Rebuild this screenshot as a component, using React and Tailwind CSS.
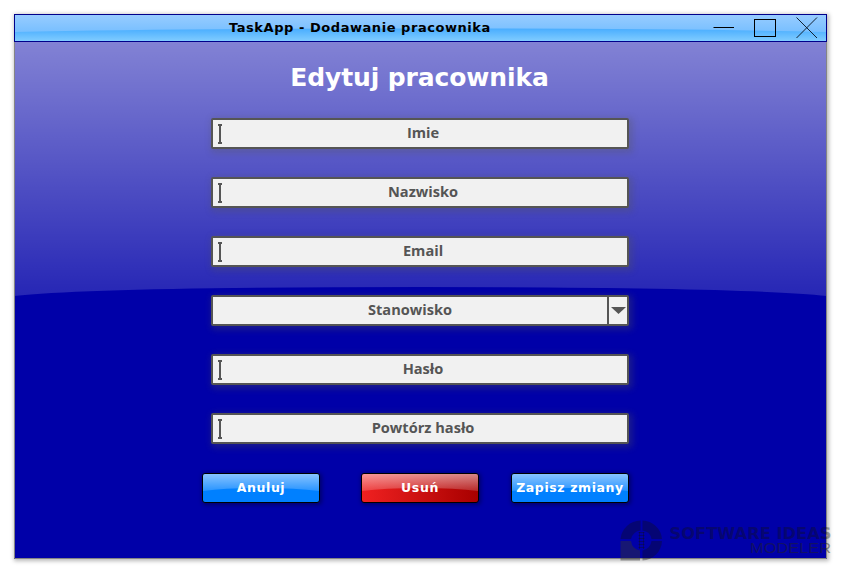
const TITLE_FONT = "font-['Verdana','DejaVu_Sans',sans-serif] font-bold";

function Caret() {
  return (
    <svg className="ml-[5px] shrink-0" width="4" height="20" viewBox="0 0 4 20" shapeRendering="crispEdges">
      <path d="M0 0H4V2H3V18H4V20H0V18H1V2H0Z" fill="#555" />
    </svg>
  );
}

function Field({ label, select }) {
  return (
    <div className="flex h-[31px] w-[418px] items-center rounded-[2px] border-2 border-[#555] bg-[#f1f1f1] shadow-[2px_2px_6px_2px_rgba(85,85,85,0.3)]">
      {!select && <Caret />}
      <span
        className={`flex-1 pb-[2px] text-center font-['Open_Sans','Noto_Sans',sans-serif] text-[14.6px] leading-[25px] font-bold text-[#555] ${
          select ? "" : "-ml-[3px]"
        }`}
      >
        {label}
      </span>
      {select && (
        <span className="flex h-full w-[20px] items-center justify-center border-l-2 border-[#555]">
          <svg className="shrink-0" width="15" height="7" viewBox="0 0 15 7">
            <path d="M0 0H15L7.5 7Z" fill="#555" />
          </svg>
        </span>
      )}
    </div>
  );
}

function Button({ label, red }) {
  return (
    <button
      className={`relative h-[30px] w-[118px] overflow-hidden rounded-[3px] border border-black shadow-[1px_1px_4px_1px_rgba(0,0,0,0.35)] ${
        red ? "bg-linear-to-r from-[#f02020] to-[#a80000]" : "bg-[#0080ff]"
      }`}
    >
      <svg className="absolute inset-0" width="116" height="28" viewBox="0 0 116 28">
        <defs>
          <linearGradient id="buttonGloss" x1="0" y1="0" x2="0" y2="1">
            <stop offset="0" stopColor="#fff" stopOpacity="0.53" />
            <stop offset="1" stopColor="#fff" stopOpacity="0.16" />
          </linearGradient>
        </defs>
        <path d="M0 0H116V17Q93 14 58 14T0 17Z" fill="url(#buttonGloss)" />
      </svg>
      <span className={`relative flex justify-center whitespace-nowrap pb-px text-[12.5px] leading-[26px] tracking-[0.6px] text-white ${TITLE_FONT}`}>
        {label}
      </span>
    </button>
  );
}

function WindowControls() {
  return (
    <svg className="ml-auto mr-[7px]" width="106" height="26" viewBox="0 0 106 26" fill="none" stroke="#000">
      <path d="M0.5 12.5H21" />
      <rect x="41.5" y="4.5" width="21" height="17" />
      <path d="M83.5 2.5L104 23M104 2.5L83.5 23" stroke="#123" />
    </svg>
  );
}

function Watermark() {
  return (
    <svg className="absolute left-[615px] top-[515px]" width="226" height="52" viewBox="615 515 226 52">
      <g fill="#111" opacity="0.34">
        <path d="M640.5 520.5A20.5 20.5 0 0 0 620.5 539H631A10.5 10.5 0 0 1 640.5 530.5Z" />
        <path d="M642.5 520.5A20.5 20.5 0 0 1 662 539H651.5A10.5 10.5 0 0 0 642.5 530.5Z" />
        <path d="M662 541A20.5 20.5 0 0 1 642.5 560.5V550.5A10.5 10.5 0 0 0 651.5 541Z" />
      </g>
      <path d="M620.5 541H631Q632 549 640 550.5V560.5H620.5Z" fill="#333" fillOpacity="0.45" />
      <path d="M639.5 532V549M643.5 532V549M638.5 532.5H644.5M638.5 535.5H644.5M638.5 538.5H644.5M638.5 541.5H644.5M638.5 544.5H644.5M638.5 547.5H644.5" stroke="#111" strokeOpacity="0.35" />
      <text x="669.5" y="539.2" textLength="162" lengthAdjust="spacingAndGlyphs" fontFamily="'DejaVu Sans', sans-serif" fontWeight="bold" fontSize="15" fill="#111" opacity="0.36">
        SOFTWARE IDEAS
      </text>
      <text x="750" y="552.5" textLength="81" lengthAdjust="spacingAndGlyphs" fontFamily="'Liberation Sans', Arial, sans-serif" fontSize="15.5" fill="#222" fillOpacity="0.5">
        MODELER
      </text>
    </svg>
  );
}

export default function App() {
  return (
    <div className="relative h-[573px] w-[841px] overflow-hidden bg-white pl-[14px] pt-[14px]">
      <div className="relative flex h-[545px] w-[813px] flex-col bg-[#0000a8] shadow-[1px_1px_4px_1px_rgba(0,0,0,0.28)]">
        <svg className="absolute left-0 top-0" width="813" height="545" viewBox="0 0 813 545">
          <defs>
            <linearGradient id="windowGloss" x1="0" y1="0" x2="0" y2="1">
              <stop offset="0" stopColor="#fff" stopOpacity="0.55" />
              <stop offset="1" stopColor="#fff" stopOpacity="0.15" />
            </linearGradient>
          </defs>
          <path d="M0 0H813V282Q730 273 406.5 273T0 282Z" fill="url(#windowGloss)" />
          <path d="M0.5 28V544.5H812.5V28" fill="none" stroke="#858585" />
        </svg>

        <header className="relative flex h-[28px] shrink-0 items-center border border-[#00008b] bg-[#40acff]">
          <svg className="absolute inset-0" width="811" height="26" viewBox="0 0 811 26">
            <defs>
              <linearGradient id="barBase" x1="0" y1="0" x2="0" y2="1">
                <stop offset="0" stopColor="#2b99ff" />
                <stop offset="0.55" stopColor="#4cafff" />
                <stop offset="1" stopColor="#80ccff" />
              </linearGradient>
              <linearGradient id="barGloss" x1="0" y1="0" x2="0" y2="1">
                <stop offset="0" stopColor="#97ccff" />
                <stop offset="1" stopColor="#78bfff" />
              </linearGradient>
            </defs>
            <rect width="811" height="26" fill="url(#barBase)" />
            <path d="M0 0H811V17Q670 13.5 405.5 13.5T0 17Z" fill="url(#barGloss)" />
          </svg>
          <h1 className={`relative ml-[214px] whitespace-nowrap text-[13px] leading-[26px] tracking-[0.55px] text-black ${TITLE_FONT}`}>
            TaskApp - Dodawanie pracownika
          </h1>
          <div className="relative ml-auto flex">
            <WindowControls />
          </div>
        </header>

        <main className="relative flex-1">
          <h2 className={`h-[76px] pt-[18px] pr-[2px] text-center text-[25px] leading-[36px] tracking-[-0.1px] text-white ${TITLE_FONT}`}>
            Edytuj pracownika
          </h2>
          <form className="ml-[197px] flex flex-col gap-[28px]">
            <Field label="Imie" />
            <Field label="Nazwisko" />
            <Field label="Email" />
            <Field label="Stanowisko" select />
            <Field label="Hasło" />
            <Field label="Powtórz hasło" />
          </form>
          <div className="ml-[188px] mt-[29px] flex">
            <Button label="Anuluj" />
            <div className="ml-[41px] mr-[32px] flex">
              <Button label="Usuń" red />
            </div>
            <Button label="Zapisz zmiany" />
          </div>
        </main>
      </div>
      <Watermark />
    </div>
  );
}
